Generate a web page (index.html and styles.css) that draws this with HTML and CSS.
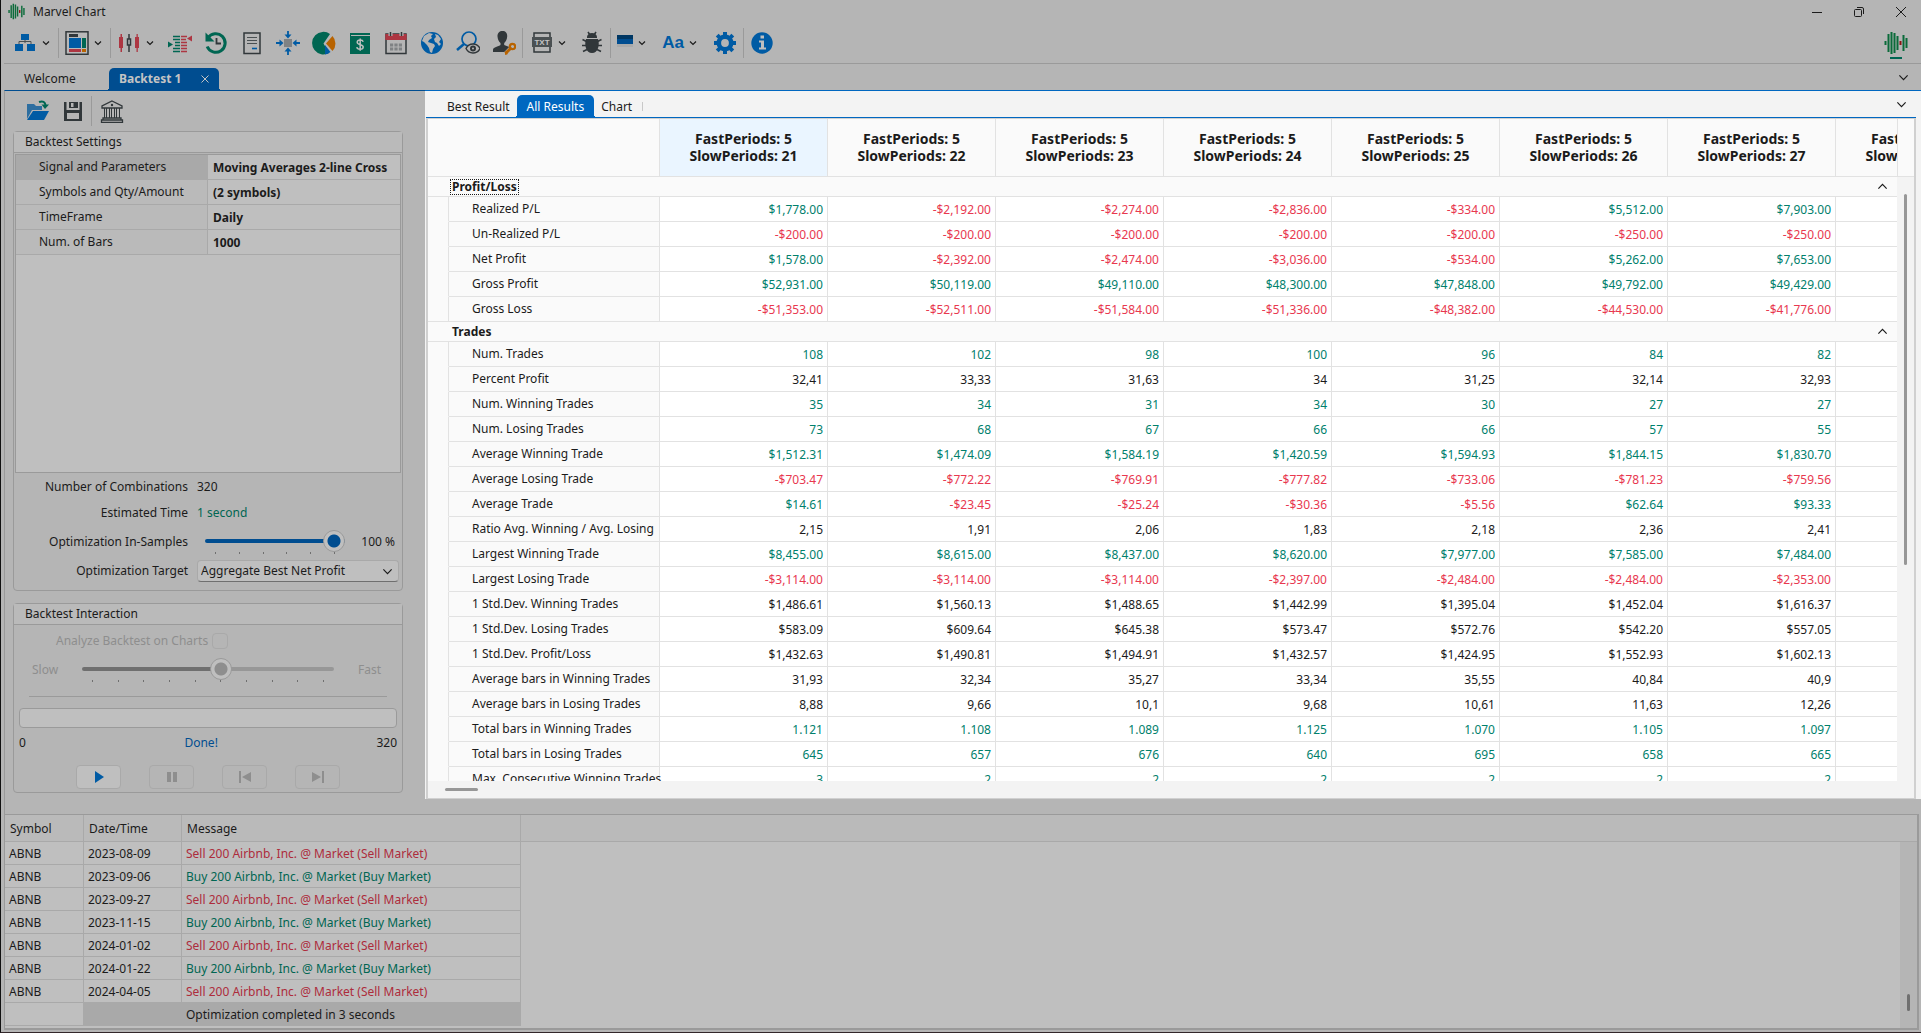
FILE: index.html
```
<!DOCTYPE html>
<html lang="en">
<head>
    <meta charset="UTF-8">
    <meta name="viewport" content="width=device-width, initial-scale=1.0">
    <title>Marvel Chart</title>
    <link rel="stylesheet" href="styles.css">
</head>
<body>
    <svg class="defs" width="0" height="0">
        <symbol id="chev" viewBox="0 0 8 8"><path d="M1 2.500 4 5.500 7 2.500" fill="none" stroke="currentColor" stroke-width="1.200" vector-effect="non-scaling-stroke"/></symbol>
        <symbol id="logo" viewBox="0 0 24 24">
            <path d="M1.500 10v4M4.500 3v18M7.500 1v22M10.500 2v20M13.500 5v14M19.500 4v16M22.500 7v10" stroke="#0b6b3a" stroke-width="2"/>
            <path d="M16.500 10v4" stroke="#8d1414" stroke-width="2"/>
        </symbol>
    </svg>

    <div class="window">
        <header class="titlebar">
            <svg class="title-logo" viewBox="0 0 24 24"><use href="#logo"/></svg>
            <span class="title">Marvel Chart</span>
            <div class="window-buttons">
                <button type="button" aria-label="Minimize"><svg viewBox="0 0 12 12"><path d="M1 6.500h10"/></svg></button>
                <button type="button" aria-label="Restore"><svg viewBox="0 0 12 12"><rect x="1.500" y="3.500" width="7" height="7" rx="1"/><path d="M4 1.500h5a1.500 1.500 0 0 1 1.500 1.500v5"/></svg></button>
                <button type="button" aria-label="Close"><svg viewBox="0 0 12 12"><path d="M1 1l10 10M11 1L1 11"/></svg></button>
            </div>
        </header>

        <nav class="toolbar">
            <button type="button" class="tool-drop" aria-label="Workspace">
                <svg class="icon" viewBox="0 0 24 24"><path d="M8 3h8v6H8zM2 13h8v7H2zM14 13h8v7h-8z" fill="#005ba4"/><path d="M12 9v3M6 13v-2.500h12V13" fill="none" stroke="#4a5052"/></svg>
                <svg class="chev"><use href="#chev"/></svg>
            </button>
            <span class="sep"></span>
            <button type="button" class="tool-drop" aria-label="Layout">
                <svg class="icon" viewBox="0 0 24 24"><rect x="1" y=".8" width="22" height="22.500" fill="#b9b9b9" stroke="#31373a" stroke-width="1.500"/><path d="M4 3h9v3H4z" fill="#31373a"/><path d="M4 7h12v10H4z" fill="#005ba4"/><path d="M17 7h4v10h-4z" fill="#006652"/><path d="M4 18h12v3H4z" fill="#ad3642"/><path d="M17 18h4v3h-4z" fill="#b86300"/></svg>
                <svg class="chev"><use href="#chev"/></svg>
            </button>
            <span class="sep"></span>
            <button type="button" class="tool-drop" aria-label="Chart type">
                <svg class="icon" viewBox="0 0 24 24"><path d="M2 6h4v11H2zM3.500 3h1.500v18H3.500zM18 6h4v11h-4zM19.500 3h1.300v18h-1.300z" fill="#ad3642"/><path d="M12 3v5M12 14v7" stroke="#31373a" stroke-width="1.500"/><rect x="10.500" y="8" width="3" height="6" fill="none" stroke="#31373a" stroke-width="1.500"/></svg>
                <svg class="chev"><use href="#chev"/></svg>
            </button>
            <button type="button" class="tool" aria-label="Order book">
                <svg class="icon" viewBox="0 0 24 24"><path d="M5 5.500h7M5 8.500h7M7 11.500h5M7 14.500h5M5 17.500h7M5 20.500h7" stroke="#006652" stroke-width="1.400"/><path d="M0 10.500l5 3-5 3z" fill="#006652"/><path d="M13 5.500h6M13 8.500h5M13 11.500h6M13 14.500h6M13 17.500h6M13 20.500h6" stroke="#ad3642" stroke-width="1.400"/><path d="M24 4.500l-5 3 5 3z" fill="#ad3642"/></svg>
            </button>
            <button type="button" class="tool" aria-label="Replay">
                <svg class="icon" viewBox="0 0 24 24"><path d="M4 7a9.300 9.300 0 1 1-.8 8.500" fill="none" stroke="#006652" stroke-width="3"/><path d="M1.500 1.500v9h9z" fill="#006652"/><path d="M12.500 7v5.500H17" fill="none" stroke="#31373a" stroke-width="1.800"/></svg>
            </button>
            <button type="button" class="tool" aria-label="Report">
                <svg class="icon" viewBox="0 0 24 24"><rect x="4" y="2" width="16" height="20.500" fill="none" stroke="#31373a" stroke-width="1.500"/><path d="M7 6.500h10M7 9.500h10M7 12.500h10" stroke="#4a5052"/><path d="M12 17.500h5" stroke="#005ba4" stroke-width="1.600"/></svg>
            </button>
            <button type="button" class="tool" aria-label="Fit content">
                <svg class="icon" viewBox="0 0 24 24"><path d="M8 8h8v8H8z" fill="#7f8284"/><path d="M12 0v5M12 24v-5M0 12h5M24 12h-5" stroke="#005ba4" stroke-width="1.800"/><path d="M8.500 3.500h7L12 7.500zM8.500 20.500h7L12 16.500zM3.500 8.500v7L7.500 12zM20.500 8.500v7L16.500 12z" fill="#005ba4"/></svg>
            </button>
            <button type="button" class="tool" aria-label="Portfolio">
                <svg class="icon" viewBox="0 0 24 24"><path d="M11.500 12.500 17 22A11.300 11.300 0 1 1 18 3z" fill="#006652"/><path d="M14 12.500 20.500 5a11 11 0 0 1 0 15z" fill="#b86300"/><path d="M13 14l5.500 7A11 11 0 0 1 13 23.500z" fill="#005ba4"/></svg>
            </button>
            <button type="button" class="tool" aria-label="Accounts">
                <svg class="icon" viewBox="0 0 24 24"><path d="M2 2h20v2H3v1h19v18H2z" fill="#006652"/><path d="M15.200 10.800c-.4-1.300-1.600-1.700-3-1.700-1.800 0-3 .8-3 2.200 0 3.200 6 1.500 6 4.600 0 1.500-1.300 2.300-3.100 2.300-1.700 0-3-.6-3.300-2.100M12.200 7.500v12.300" fill="none" stroke="#bfbfbf" stroke-width="1.500"/></svg>
            </button>
            <button type="button" class="tool" aria-label="Calendar">
                <svg class="icon" viewBox="0 0 24 24"><path d="M2 3h20v19.500H2z" fill="none" stroke="#31373a" stroke-width="1.500"/><path d="M1.300 3h21.400v6H1.300z" fill="#ad3642"/><path d="M6.500 1v4M17.500 1v4" stroke="#b5b5b5" stroke-width="4"/><path d="M6.500 1v4M17.500 1v4" stroke="#31373a" stroke-width="1.500"/><path d="M6 14h12M6 18h12" stroke="#7f8284" stroke-width="3" stroke-dasharray="3.200 1.200"/></svg>
            </button>
            <button type="button" class="tool" aria-label="Web">
                <svg class="icon" viewBox="0 0 24 24"><circle cx="12" cy="12" r="11" fill="#005ba4"/><path d="M4 5l5-3 4 1-2 2 1 2-3 2-1 2 3 1 3 1 1 2-2 3-1 4-2-1-1-4-2-3-3-3-2-1zM15 3l3 1 3 4-2 3 2 2-2 2-2-3-2-1-1-3 2-2z" fill="#b5b5b5"/></svg>
            </button>
            <button type="button" class="tool" aria-label="Watch">
                <svg class="icon" viewBox="0 0 24 24"><circle cx="13" cy="8" r="7" fill="none" stroke="#005ba4" stroke-width="1.700"/><path d="M8 13l-7 6" stroke="#005ba4" stroke-width="2.500"/><path d="M10 17.500c3-6 11-6 14 0-3 6-11 6-14 0z" fill="#b5b5b5" stroke="#31373a" stroke-width="1.400"/><circle cx="17" cy="17.500" r="2" fill="none" stroke="#31373a" stroke-width="2"/></svg>
            </button>
            <button type="button" class="tool" aria-label="User rights">
                <svg class="icon" viewBox="0 0 24 24"><path d="M10.500 0c3 0 5 2 4.700 5.500-.2 3-1.700 5.500-3 6.500v2l5 2-5 5H1v-2c0-3 4-3 7.500-5v-2c-1.500-1-2.700-3.500-3-6.500C5.300 2 7.500 0 10.500 0z" fill="#31373a"/><path d="M13.500 22.500l6-6" stroke="#b86300" stroke-width="3"/><path d="M13 20l3 3-3 1z" fill="#b86300"/><circle cx="20.500" cy="15.500" r="2.700" fill="none" stroke="#b86300" stroke-width="2.200"/></svg>
            </button>
            <span class="sep"></span>
            <button type="button" class="tool-drop" aria-label="Export to text">
                <svg class="icon" viewBox="0 0 24 24"><rect x="5" y="2" width="16" height="19" fill="none" stroke="#31373a" stroke-width="1.500"/><path d="M3 6h20v10H3z" fill="#4a5052"/><text x="13" y="14" class="txt-label">TXT</text></svg>
                <svg class="chev"><use href="#chev"/></svg>
            </button>
            <button type="button" class="tool" aria-label="Debug">
                <svg class="icon" viewBox="0 0 24 24"><path d="M7 6a5 4 0 0 1 10 0v1H7zM6 8h12c2 6 0 14-6 14S4 14 6 8z" fill="#31373a"/><path d="M8 1l2 3M16 1l-2 3M2.500 8.500l4 2M21.500 8.500l-4 2M2 14.500h5M22 14.500h-5M3 20.500l4-2M21 20.500l-4-2" stroke="#31373a" stroke-width="1.600"/><path d="M6 7.500h12" stroke="#b5b5b5"/></svg>
            </button>
            <span class="sep"></span>
            <button type="button" class="tool-drop tool-drop-flag" aria-label="Color scheme">
                <svg class="flag" viewBox="0 0 16 16"><path d="M0 0h16v4H0z" fill="#003763"/><path d="M0 4h16v5H0z" fill="#004d90"/><path d="M0 9h16v3H0z" fill="#a9a9a9"/></svg>
                <svg class="chev"><use href="#chev"/></svg>
            </button>
            <button type="button" class="tool-drop tool-drop-font">
                <span class="font-sample">Aa</span>
                <svg class="chev"><use href="#chev"/></svg>
            </button>
            <button type="button" class="tool" aria-label="Options">
                <svg class="icon" viewBox="0 0 24 24"><circle cx="12" cy="12" r="6.200" fill="none" stroke="#005ba4" stroke-width="4.600"/><path d="M12 1v4M12 19v4M1 12h4M19 12h4M4.200 4.200l3 3M16.800 16.800l3 3M19.800 4.200l-3 3M7.200 16.800l-3 3" stroke="#005ba4" stroke-width="4"/></svg>
            </button>
            <span class="sep"></span>
            <button type="button" class="tool" aria-label="About">
                <svg class="icon" viewBox="0 0 24 24"><circle cx="12" cy="12" r="10.700" fill="#005ba4"/><path d="M10.500 4.500h3.500v3h-3.500zM9 9.500h5v7h2v2H9v-2h2v-5H9z" fill="#bfbfbf"/></svg>
            </button>
            <div class="brand"><svg class="icon" viewBox="0 0 24 24"><use href="#logo"/></svg></div>
        </nav>

        <div class="tabs main-tabs">
            <button type="button" class="tab">Welcome</button>
            <div class="tab tab-active">
                <button type="button">Backtest 1</button>
                <button type="button" class="tab-close" aria-label="Close tab"><svg viewBox="0 0 8 8"><path d="M.5 .5l7 7M7.500 .5l-7 7"/></svg></button>
            </div>
            <button type="button" class="tabs-more" aria-label="More tabs"><svg class="chev-lg"><use href="#chev"/></svg></button>
        </div>

        <main class="workspace">
            <aside class="side">
                <div class="side-tools">
                    <button type="button" class="side-tool" aria-label="Open">
                        <svg class="icon" viewBox="0 0 24 24"><path d="M2 5h7l2 2h6v4H7l-5 9z" fill="#2d6ea0"/><path d="M8 12h16l-5 9H2z" fill="#005ba4"/><path d="M14 3c4-1.500 6 0 6.500 3" fill="none" stroke="#006652" stroke-width="2"/><path d="M16.500 5.500H24L20 10z" fill="#006652"/></svg>
                    </button>
                    <button type="button" class="side-tool" aria-label="Save">
                        <svg class="icon" viewBox="0 0 24 24"><path d="M3 3h2.500v8h13V3H21v19H3z" fill="#31373a"/><path d="M8 3h9v6H8z" fill="#31373a"/><path d="M10 4h2.500v4H10zM6 14h12v6H6z" fill="#b5b5b5"/></svg>
                    </button>
                    <span class="sep"></span>
                    <button type="button" class="side-tool" aria-label="Bank">
                        <svg class="icon" viewBox="0 0 24 24"><path d="M12 2l10 5v2H2V7zM3 19h18v2H3zM1.500 21h21v2.500h-21z" fill="none" stroke="#31373a" stroke-width="1.300"/><path d="M4.500 9v10M6.500 9v10M9.500 9v10M11.500 9v10M14.500 9v10M16.500 9v10M19.500 9v10" stroke="#31373a"/><circle cx="12" cy="6" r="1.200" fill="#31373a"/></svg>
                    </button>
                </div>

                <section class="group">
                    <h2>Backtest Settings</h2>
                    <div class="props">
                        <table>
                            <tr class="prop-selected"><th scope="row">Signal and Parameters</th><td>Moving Averages 2-line Cross</td></tr>
                            <tr><th scope="row">Symbols and Qty/Amount</th><td>(2 symbols)</td></tr>
                            <tr><th scope="row">TimeFrame</th><td>Daily</td></tr>
                            <tr><th scope="row">Num. of Bars</th><td>1000</td></tr>
                        </table>
                    </div>
                    <div class="fields">
                        <span class="label">Number of Combinations</span>
                        <span>320</span>
                        <span class="label">Estimated Time</span>
                        <span class="time">1 second</span>
                        <label class="label" for="samples">Optimization In-Samples</label>
                        <div class="sample-row">
                            <div class="slider">
                                <input type="range" id="samples" class="range-full" min="0" max="100" value="100">
                                <div class="ticks"><i></i><i></i><i></i><i></i><i></i><i></i></div>
                            </div>
                            <span>100 %</span>
                        </div>
                        <label class="label" for="target">Optimization Target</label>
                        <div class="select">
                            <select id="target"><option>Aggregate Best Net Profit</option></select>
                            <svg class="chev-lg"><use href="#chev"/></svg>
                        </div>
                    </div>
                </section>

                <section class="group interaction">
                    <h2>Backtest Interaction</h2>
                    <div class="analyze">
                        <label for="analyze">Analyze Backtest on Charts</label>
                        <input type="checkbox" id="analyze" disabled>
                    </div>
                    <div class="speed">
                        <label for="speed">Slow</label>
                        <div class="slider">
                            <input type="range" id="speed" class="range-half" min="1" max="10" value="6" disabled>
                            <div class="ticks"><i></i><i></i><i></i><i></i><i></i><i></i><i></i><i></i><i></i><i></i></div>
                        </div>
                        <span>Fast</span>
                    </div>
                    <hr>
                    <div class="progress"></div>
                    <div class="progress-text"><span>0</span><span class="done">Done!</span><span>320</span></div>
                    <div class="player">
                        <button type="button" aria-label="Play"><svg viewBox="0 0 16 12"><path d="M4 0l9 6-9 6z"/></svg></button>
                        <button type="button" aria-label="Pause" disabled><svg viewBox="0 0 16 12"><path d="M3 1h4v10H3zM9 1h4v10H9z"/></svg></button>
                        <button type="button" aria-label="Previous" disabled><svg viewBox="0 0 16 12"><path d="M2 0h2v12H2zM14 1v10L5 6z"/></svg></button>
                        <button type="button" aria-label="Next" disabled><svg viewBox="0 0 16 12"><path d="M12 0h2v12h-2zM2 1v10l9-5z"/></svg></button>
                    </div>
                </section>
            </aside>

            <section class="results">
                <div class="tabs result-tabs">
                    <button type="button" class="tab">Best Result</button>
                    <button type="button" class="tab tab-active">All Results</button>
                    <button type="button" class="tab">Chart</button>
                    <span class="tab-sep"></span>
                    <button type="button" class="tabs-more" aria-label="More tabs"><svg class="chev-lg"><use href="#chev"/></svg></button>
                </div>
                <div class="grid">
                    <div class="grid-view">
                        <table class="results-table">
                            <colgroup><col class="col-indent"><col class="col-name"><col span="8" class="col-value"></colgroup>
                            <thead><tr id="head"><th colspan="2"></th></tr></thead>
                            <tbody id="rows"></tbody>
                        </table>
                    </div>
                    <div class="vscroll"><div class="vscroll-head"></div><div class="vscroll-thumb"></div></div>
                    <div class="hscroll"><div class="hscroll-thumb"></div></div>
                </div>
            </section>
        </main>

        <footer class="log">
            <div class="log-view">
                <div class="log-head-fill"></div>
                <table class="log-table">
                    <thead><tr><th>Symbol</th><th>Date/Time</th><th>Message</th></tr></thead>
                    <tbody>
                        <tr><td>ABNB</td><td>2023-08-09</td><td class="sell">Sell 200 Airbnb, Inc. @ Market (Sell Market)</td></tr>
                        <tr><td>ABNB</td><td>2023-09-06</td><td class="buy">Buy 200 Airbnb, Inc. @ Market (Buy Market)</td></tr>
                        <tr><td>ABNB</td><td>2023-09-27</td><td class="sell">Sell 200 Airbnb, Inc. @ Market (Sell Market)</td></tr>
                        <tr><td>ABNB</td><td>2023-11-15</td><td class="buy">Buy 200 Airbnb, Inc. @ Market (Buy Market)</td></tr>
                        <tr><td>ABNB</td><td>2024-01-02</td><td class="sell">Sell 200 Airbnb, Inc. @ Market (Sell Market)</td></tr>
                        <tr><td>ABNB</td><td>2024-01-22</td><td class="buy">Buy 200 Airbnb, Inc. @ Market (Buy Market)</td></tr>
                        <tr><td>ABNB</td><td>2024-04-05</td><td class="sell">Sell 200 Airbnb, Inc. @ Market (Sell Market)</td></tr>
                        <tr class="log-selected"><td></td><td></td><td>Optimization completed in 3 seconds</td></tr>
                    </tbody>
                </table>
            </div>
            <div class="log-scroll"><div class="log-thumb"></div></div>
        </footer>
    </div>

    <script src="results.js"></script>
</body>
</html>
```
FILE: styles.css
```
* {
    box-sizing: border-box;
}

body {
    margin: 0;
    font-family: 'Noto Sans', Tahoma, sans-serif;
    font-size: 12px;
    line-height: 16px;
    color: #1b1b1b;
    background-color: #b5b5b5;
}

button, input, select {
    font: inherit;
    color: inherit;
}

button {
    padding: 0;
    border: none;
    background: none;
}

svg {
    display: block;
    flex-shrink: 0;
}

table {
    border-collapse: separate;
    border-spacing: 0;
    table-layout: fixed;
}

th {
    font-weight: normal;
    text-align: left;
}

td, th {
    padding: 0;
    white-space: nowrap;
}

.defs {
    position: absolute;
}

.window {
    display: flex;
    flex-direction: column;
    height: 100vh;
    padding-left: 3px;
    border-left: 1px solid #111;
    border-bottom: 1px solid #33272a;
    overflow: hidden;
}

/* Title bar */
.titlebar {
    display: flex;
    align-items: center;
    height: 23px;
    padding: 0 14px 0 4px;
}

.title-logo {
    width: 17px;
    height: 17px;
}

.title {
    margin-left: 8px;
}

.window-buttons {
    display: flex;
    gap: 30px;
    margin-left: auto;
}

.window-buttons svg {
    width: 12px;
    height: 12px;
    fill: none;
    stroke: #1b1b1b;
}

/* Toolbar */
.toolbar {
    display: flex;
    align-items: center;
    height: 41px;
    padding-left: 3px;
    border-bottom: 1px solid #9a9a9a;
}

.icon {
    width: 24px;
    height: 24px;
}

.chev {
    width: 8px;
    height: 8px;
}

.chev-lg {
    width: 11px;
    height: 11px;
}

.tool {
    display: flex;
    justify-content: center;
    width: 36px;
}

.tool-drop {
    display: flex;
    align-items: center;
    gap: 5px;
    width: 51px;
    padding-left: 6px;
}

.tool-drop-flag {
    width: 45px;
}

.tool-drop-font {
    width: 51px;
}

.flag {
    width: 16px;
    height: 16px;
}

.font-sample {
    width: 22px;
    font-family: 'Liberation Sans', Arial, sans-serif;
    font-size: 17px;
    font-weight: bold;
    color: #005ba4;
}

.txt-label {
    font-family: 'Liberation Sans', Arial, sans-serif;
    font-size: 8px;
    font-weight: bold;
    text-anchor: middle;
    fill: #c4c4c4;
}

.sep {
    width: 1px;
    height: 30px;
    background-color: #9a9a9a;
}

.brand {
    margin: 3px 13px 0 auto;
    border-bottom: 2px solid #006652;
    border-image: linear-gradient(to right, transparent 7px, #006652 7px, #006652 17px, transparent 17px) 2;
}

.brand svg {
    margin-bottom: 2px;
}

/* Tabs */
.tabs {
    display: flex;
    align-items: flex-end;
}

.tab {
    display: flex;
    align-items: center;
    height: 22px;
    padding: 0 10px;
}

.tab-active {
    position: relative;
    border-radius: 5px 5px 0 0;
    color: #fff;
    background-color: #0067c0;
}

/* flared feet of the active tab */
.tab-active::before,
.tab-active::after {
    content: '';
    position: absolute;
    bottom: 0;
    width: 3px;
    height: 3px;
    background: radial-gradient(circle at 0 0, transparent 3px, #0067c0 3px);
}

.tab-active::before {
    left: -3px;
}

.tab-active::after {
    right: -3px;
    transform: scaleX(-1);
}

.tabs-more {
    margin: 0 12px 7px auto;
}

.main-tabs {
    height: 26px;
    padding-left: 10px;
}

.main-tabs > .tab:first-child {
    width: 95px;
}

.main-tabs .tab-active {
    gap: 20px;
    font-weight: bold;
    color: #c4c4c4;
    background-color: #004d90;
}

.main-tabs .tab-active::before,
.main-tabs .tab-active::after {
    background: radial-gradient(circle at 0 0, transparent 3px, #004d90 3px);
}

.tab-close svg {
    width: 8px;
    height: 8px;
    stroke: #c4c4c4;
}

/* Workspace */
.workspace {
    display: flex;
    flex: 1;
    min-height: 0;
}

.side {
    width: 421px;
    padding-right: 22px;
    padding-left: 8px;
    border-top: 1px solid #004d90;
    border-left: 1px solid #9a9a9a;
}

.side-tools {
    display: flex;
    align-items: center;
    height: 40px;
    padding-left: 6px;
}

.side-tools .sep {
    margin-right: 2px;
}

.side-tool {
    display: flex;
    justify-content: center;
    width: 36px;
}

.group {
    border: 1px solid #9a9a9a;
    border-radius: 4px;
}

.group h2 {
    height: 21px;
    margin: 0;
    padding-left: 11px;
    border-bottom: 1px solid #9a9a9a;
    font-size: 12px;
    line-height: 20px;
    font-weight: normal;
    background-color: #bababa;
}

.props {
    height: 319px;
    margin: 1px;
    border: 1px solid #9a9a9a;
    background-color: #bfbfbf;
}

.props table {
    width: 100%;
}

.props th, .props td {
    height: 25px;
    border-bottom: 1px solid #a9a9a9;
}

.props th {
    width: 50%;
    padding-left: 23px;
    border-right: 1px solid #a9a9a9;
    background-color: #bababa;
}

.props td {
    padding-top: 2px;
    padding-left: 5px;
    font-weight: bold;
}

.props .prop-selected th {
    background-color: #a9a9a9;
}

.fields {
    display: grid;
    grid-template-columns: 174px 1fr;
    grid-template-rows: 26px 26px 31px 28px;
    column-gap: 9px;
    align-items: center;
    padding-right: 3px;
    margin-bottom: 5px;
}

.label {
    text-align: right;
}

.time {
    color: #006652;
}

.sample-row {
    display: flex;
    align-items: center;
    justify-content: space-between;
    padding: 0 4px 0 8px;
}

.sample-row .slider {
    width: 140px;
}

.slider input {
    display: block;
    width: 100%;
    height: 22px;
    margin: 0;
    appearance: none;
    background: none;
}

.slider input::-webkit-slider-runnable-track {
    height: 4px;
    border-radius: 2px;
    background-color: #004d90;
}

.slider input::-webkit-slider-thumb {
    appearance: none;
    width: 22px;
    height: 22px;
    margin-top: -9px;
    border: 1px solid #9a9a9a;
    border-radius: 50%;
    background: radial-gradient(circle, #004d90 6px, #bfbfbf 7px);
}

.slider .range-half::-webkit-slider-runnable-track {
    background: linear-gradient(to right, #6f6f6f 55%, #979797 55%);
}

.slider .range-half::-webkit-slider-thumb {
    background: radial-gradient(circle, #8e8e8e 6px, #bfbfbf 7px);
}

.ticks {
    display: flex;
    justify-content: space-between;
    padding: 0 10px;
}

.ticks i {
    width: 1px;
    height: 2px;
    background-color: #6f6f6f;
}

.select {
    position: relative;
}

.select select {
    width: 100%;
    height: 22px;
    padding: 0 3px;
    border: 1px solid #a9a9a9;
    border-bottom-color: #6f6f6f;
    border-radius: 4px;
    appearance: none;
    background-color: #bfbfbf;
}

.select svg {
    position: absolute;
    top: 6px;
    right: 6px;
    pointer-events: none;
}

/* Backtest interaction */
.interaction {
    margin-top: 12px;
}

.analyze {
    display: flex;
    align-items: center;
    gap: 4px;
    margin: 8px 0 0 42px;
    color: #8e8e8e;
}

.analyze input {
    width: 16px;
    height: 16px;
    margin: 0;
    border: 1px solid #a9a9a9;
    border-radius: 4px;
    appearance: none;
}

.speed {
    display: flex;
    align-items: center;
    justify-content: space-between;
    margin-top: 9px;
    padding: 0 21px 0 18px;
    color: #8e8e8e;
}

.speed .slider {
    width: 252px;
}

.interaction hr {
    margin: 14px 15px 11px;
    border: none;
    border-top: 1px solid #9a9a9a;
}

.progress {
    height: 20px;
    margin: 0 5px;
    border: 1px solid #9a9a9a;
    border-radius: 4px;
    background-color: #bfbfbf;
}

.progress-text {
    display: flex;
    justify-content: space-between;
    margin: 7px 5px 14px;
}

.done {
    color: #004d90;
}

.player {
    display: flex;
    justify-content: center;
    gap: 28px;
    margin-bottom: 3px;
}

.player button {
    display: flex;
    align-items: center;
    justify-content: center;
    width: 45px;
    height: 24px;
    border: 1px solid #a9a9a9;
    border-radius: 4px;
    background-color: #bfbfbf;
}

.player svg {
    width: 16px;
    height: 12px;
    fill: #005ba4;
}

.player button:disabled {
    background: none;
}

.player button:disabled svg {
    fill: #8e8e8e;
}

/* Results */
.results {
    display: flex;
    flex: 1;
    flex-direction: column;
    min-width: 0;
    margin-bottom: 15px;
    padding: 0 5px 0 1px;
    border-top: 1px solid #0067c0;
    background-color: #f3f3f3;
}

.result-tabs {
    height: 27px;
    padding-left: 11px;
    border-bottom: 1px solid #0067c0;
}

.result-tabs .tab {
    padding-top: 2px;
}

.result-tabs .tab-active {
    margin: 0 -3px;
}

.tab-sep {
    width: 1px;
    height: 9px;
    margin-bottom: 6px;
    background-color: #c8c8c8;
}

.result-tabs .tabs-more {
    margin-right: 9px;
}

.grid {
    display: grid;
    flex: 1;
    grid-template-columns: minmax(0, 1fr) 17px;
    grid-template-rows: minmax(0, 1fr) 17px;
    min-height: 0;
    border: 2px solid #d0d0d0;
    border-width: 1px 2px 1px 2px;
}

.grid-view {
    overflow: hidden;
    background-color: #fafafa;
}

.results-table {
    width: 1576px;
}

.col-indent {
    width: 21px;
}

.col-name {
    width: 211px;
}

.col-value {
    width: 168px;
}

.results-table th,
.results-table td {
    border-right: 1px solid #e2e2e2;
    border-bottom: 1px solid #e2e2e2;
}

.results-table thead th {
    height: 58px;
    padding-bottom: 2px;
    font-size: 14px;
    line-height: 17px;
    font-weight: bold;
    text-align: center;
}

.results-table thead .best {
    background-color: #eaf5ff;
}

.results-table tbody td {
    height: 25px;
    padding-top: 2px;
    padding-right: 4px;
    text-align: right;
    background-color: #fff;
}

.results-table tbody .indent {
    border-bottom-color: transparent;
    background-color: #fafafa;
}

.results-table tbody .indent-last {
    border-bottom-color: #e2e2e2;
}

.results-table tbody .name {
    padding-left: 23px;
    background-color: #fafafa;
}

.results-table tbody .section {
    height: 20px;
    padding-top: 0;
    font-weight: bold;
    background-color: #fafafa;
}

.section-row {
    display: flex;
    justify-content: space-between;
    align-items: center;
    height: 19px;
    padding-left: 22px;
}

.section-title {
    padding: 0 1px;
    border: 1px solid transparent;
    line-height: 14px;
}

.section-focused {
    border: 1px dotted #1b1b1b;
}

.section-row button {
    position: sticky;
    right: 9px;
    transform: rotate(180deg);
}

.results-table .positive {
    color: #00806c;
}

.results-table .negative {
    color: #e8384f;
}

.vscroll-head {
    height: 58px;
    border-left: 1px solid #e2e2e2;
    border-bottom: 1px solid #e2e2e2;
    background-color: #fafafa;
}

.vscroll-thumb {
    width: 3px;
    height: 371px;
    margin: 17px 0 0 7px;
    border-radius: 2px;
    background-color: #979797;
}

.hscroll {
    grid-column: span 2;
    padding: 7px 0 0 17px;
}

.hscroll-thumb {
    width: 33px;
    height: 3px;
    border-radius: 2px;
    background-color: #979797;
}

/* Message log */
.log {
    display: flex;
    height: 216px;
    margin: 0 2px 2px 0;
    border: 2px solid #9a9a9a;
    border-width: 1px 2px 2px 1px;
    background-color: #bfbfbf;
}

.log-view {
    position: relative;
    flex: 1;
}

.log-head-fill {
    position: absolute;
    top: 0;
    left: 0;
    right: -17px;
    height: 27px;
    border-bottom: 1px solid #a9a9a9;
    background-color: #bababa;
}

.log-table {
    position: relative;
    width: 516px;
}

.log-table th:nth-child(1) {
    width: 79px;
}

.log-table th:nth-child(2) {
    width: 98px;
}

.log-table th, .log-table td {
    height: 23px;
    padding-top: 1px;
    padding-left: 4px;
    border-right: 1px solid #a9a9a9;
    border-bottom: 1px solid #a9a9a9;
}

.log-table th {
    height: 27px;
    padding-left: 5px;
}

.log-table .sell {
    color: #ad2c3c;
}

.log-table .buy {
    color: #006652;
}

.log-selected td:not(:first-child) {
    background-color: #a9a9a9;
}

.log-scroll {
    display: flex;
    align-items: flex-end;
    justify-content: center;
    width: 17px;
    margin-top: 27px;
    padding-bottom: 17px;
    background-color: #b5b5b5;
}

.log-thumb {
    width: 3px;
    height: 17px;
    border-radius: 2px;
    background-color: #6f6f6f;
}
```
FILE: results.js
```
const slowPeriods = [21, 22, 23, 24, 25, 26, 27, 28];

const sections = [
    {
        title: 'Profit/Loss',
        focused: true,
        rows: [
            ['Realized P/L', 'money', '$1,778.00', '-$2,192.00', '-$2,274.00', '-$2,836.00', '-$334.00', '$5,512.00', '$7,903.00'],
            ['Un-Realized P/L', 'money', '-$200.00', '-$200.00', '-$200.00', '-$200.00', '-$200.00', '-$250.00', '-$250.00'],
            ['Net Profit', 'money', '$1,578.00', '-$2,392.00', '-$2,474.00', '-$3,036.00', '-$534.00', '$5,262.00', '$7,653.00'],
            ['Gross Profit', 'money', '$52,931.00', '$50,119.00', '$49,110.00', '$48,300.00', '$47,848.00', '$49,792.00', '$49,429.00'],
            ['Gross Loss', 'money', '-$51,353.00', '-$52,511.00', '-$51,584.00', '-$51,336.00', '-$48,382.00', '-$44,530.00', '-$41,776.00']
        ]
    },
    {
        title: 'Trades',
        rows: [
            ['Num. Trades', 'money', '108', '102', '98', '100', '96', '84', '82'],
            ['Percent Profit', 'plain', '32,41', '33,33', '31,63', '34', '31,25', '32,14', '32,93'],
            ['Num. Winning Trades', 'money', '35', '34', '31', '34', '30', '27', '27'],
            ['Num. Losing Trades', 'money', '73', '68', '67', '66', '66', '57', '55'],
            ['Average Winning Trade', 'money', '$1,512.31', '$1,474.09', '$1,584.19', '$1,420.59', '$1,594.93', '$1,844.15', '$1,830.70'],
            ['Average Losing Trade', 'money', '-$703.47', '-$772.22', '-$769.91', '-$777.82', '-$733.06', '-$781.23', '-$759.56'],
            ['Average Trade', 'money', '$14.61', '-$23.45', '-$25.24', '-$30.36', '-$5.56', '$62.64', '$93.33'],
            ['Ratio Avg. Winning / Avg. Losing', 'plain', '2,15', '1,91', '2,06', '1,83', '2,18', '2,36', '2,41'],
            ['Largest Winning Trade', 'money', '$8,455.00', '$8,615.00', '$8,437.00', '$8,620.00', '$7,977.00', '$7,585.00', '$7,484.00'],
            ['Largest Losing Trade', 'money', '-$3,114.00', '-$3,114.00', '-$3,114.00', '-$2,397.00', '-$2,484.00', '-$2,484.00', '-$2,353.00'],
            ['1 Std.Dev. Winning Trades', 'plain', '$1,486.61', '$1,560.13', '$1,488.65', '$1,442.99', '$1,395.04', '$1,452.04', '$1,616.37'],
            ['1 Std.Dev. Losing Trades', 'plain', '$583.09', '$609.64', '$645.38', '$573.47', '$572.76', '$542.20', '$557.05'],
            ['1 Std.Dev. Profit/Loss', 'plain', '$1,432.63', '$1,490.81', '$1,494.91', '$1,432.57', '$1,424.95', '$1,552.93', '$1,602.13'],
            ['Average bars in Winning Trades', 'plain', '31,93', '32,34', '35,27', '33,34', '35,55', '40,84', '40,9'],
            ['Average bars in Losing Trades', 'plain', '8,88', '9,66', '10,1', '9,68', '10,61', '11,63', '12,26'],
            ['Total bars in Winning Trades', 'money', '1.121', '1.108', '1.089', '1.125', '1.070', '1.105', '1.097'],
            ['Total bars in Losing Trades', 'money', '645', '657', '676', '640', '695', '658', '665'],
            ['Max. Consecutive Winning Trades', 'money', '3', '2', '2', '2', '2', '2', '2']
        ]
    }
];

document.getElementById('head').innerHTML += slowPeriods.map((slow, i) =>
    `<th class="${i === 0 ? 'best' : ''}">FastPeriods: 5<br>SlowPeriods: ${slow}</th>`
).join('');

function valueCell(value, kind) {
    if (kind === 'plain') return `<td>${value}</td>`;
    return `<td class="${value.startsWith('-') ? 'negative' : 'positive'}">${value}</td>`;
}

let html = '';
for (const section of sections) {
    html += `<tr><td class="section" colspan="10"><div class="section-row">
        <span class="section-title ${section.focused ? 'section-focused' : ''}">${section.title}</span>
        <button type="button" aria-label="Collapse"><svg class="chev-lg"><use href="#chev"/></svg></button>
    </div></td></tr>`;
    section.rows.forEach(([name, kind, ...values], i) => {
        const last = i === section.rows.length - 1 ? 'indent-last' : '';
        html += `<tr><td class="indent ${last}"></td><th scope="row" class="name">${name}</th>`;
        html += values.map(value => valueCell(value, kind)).join('') + '<td></td></tr>';
    });
}
document.getElementById('rows').innerHTML = html;
```
